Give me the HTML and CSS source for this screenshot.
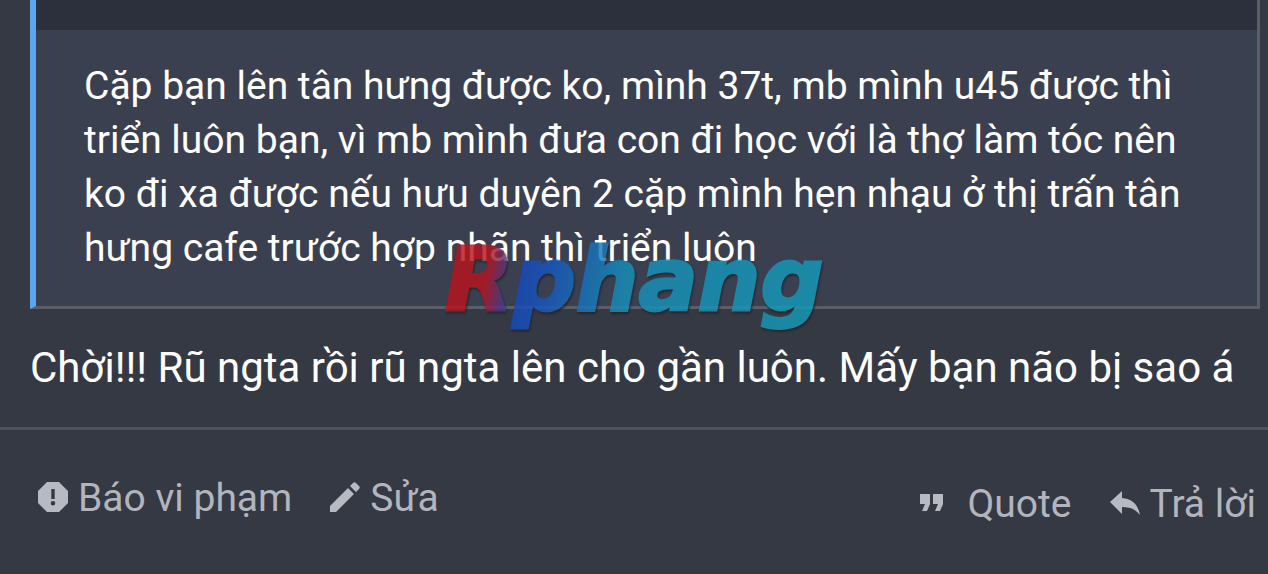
FILE: index.html
```html
<!DOCTYPE html>
<html lang="vi">
<head>
<meta charset="utf-8">
<meta name="viewport" content="width=device-width, initial-scale=1">
<title>Rphang</title>
<link rel="stylesheet" href="styles.css">
</head>
<body>
<article class="post">
  <div class="post-body">
    <blockquote class="quote">
      <div class="quote-head"></div>
      <p class="quote-text">Cặp bạn lên tân hưng được ko, mình 37t, mb mình u45 được thì triển luôn bạn, vì mb mình đưa con đi học với là thợ làm tóc nên ko đi xa được nếu hưu duyên 2 cặp mình hẹn nhạu ở thị trấn tân hưng cafe trước hợp nhãn thì triển luôn</p>
    </blockquote>
    <p class="reply-text">Chời!!! Rũ ngta rồi rũ ngta lên cho gần luôn. Mấy bạn não bị sao á</p>
  </div>
  <footer class="actions">
    <div class="group">
      <a class="action" href="#report">
        <svg class="icon" viewBox="0 0 30 32" aria-hidden="true"><path fill-rule="evenodd" d="M9 0h12l9 9v12l-9 9H9l-9-9V9zM13.300 7v10h3.400V7zM15 19a2.300 2.300 0 1 0 0 4.600 2.300 2.300 0 0 0 0-4.600z"/></svg>
        <span>Báo vi phạm</span>
      </a>
      <a class="action" href="#edit">
        <svg class="icon" viewBox="0 0 30 32" aria-hidden="true"><path d="M0 24 18 6l6 6L6 30H0zM20 4l3-3q1.500-1.500 3 0l3 3q1.500 1.500 0 3l-3 3z"/></svg>
        <span>Sửa</span>
      </a>
    </div>
    <div class="group group-end">
      <a class="action action-quote" href="#quote">
        <svg class="icon icon-quote" viewBox="0 0 24 20" aria-hidden="true"><path d="M0 0h10v10L7 17H2l3-7H0zM13 0h10v10l-3 7h-5l3-7h-5z"/></svg>
        <span>Quote</span>
      </a>
      <a class="action" href="#reply">
        <svg class="icon" viewBox="0 0 30 32" aria-hidden="true"><path d="M12 3v7c11 1 16 7 18 17-5-6-10-8-18-8v7L0 14z"/></svg>
        <span>Trả lời</span>
      </a>
    </div>
  </footer>
  <svg class="watermark" viewBox="0 0 390 120" role="img" aria-label="Rphang">
    <defs>
      <linearGradient id="brand" gradientUnits="userSpaceOnUse" x1="0" y1="0" x2="380" y2="65">
        <stop offset="0" stop-color="#b8141d"/>
        <stop offset=".14" stop-color="#b8141d"/>
        <stop offset=".22" stop-color="#1649bd"/>
        <stop offset=".3" stop-color="#1756bd"/>
        <stop offset=".5" stop-color="#178fb8"/>
        <stop offset="1" stop-color="#159bb9"/>
      </linearGradient>
    </defs>
    <text class="brand" x="6" y="79" fill="url(#brand)" stroke="url(#brand)">Rphang</text>
  </svg>
</article>
</body>
</html>
```
FILE: styles.css
```css
* { box-sizing: border-box; }
body {
  margin: 0;
  background: #353943;
  color: #fff;
  font-family: Roboto, "Noto Sans", sans-serif;
}
.post { position: relative; }
.post-body {
  padding: 0 8px 31px 30px;
  border-bottom: 3px solid #4d515b;
}
.quote {
  margin: 0;
  background: #3b4050;
  border: 3px solid #5b5e66;
  border-top: 0;
  border-left: 6px solid #5ba6f0;
}
.quote-head {
  height: 30px;
  background: #2c303c;
}
.quote-text {
  margin: 0;
  padding: 29px 48px 31px;
  font-size: 39px;
  line-height: 54px;
}
.reply-text {
  margin: 31px 0 0;
  font-size: 42px;
  line-height: 56px;
  white-space: nowrap;
}
.actions {
  display: flex;
  justify-content: space-between;
  align-items: flex-start;
  padding: 44px 12px 0 38px;
}
.group {
  display: flex;
  gap: 38px;
}
.group-end {
  padding-top: 6px;
}
.action {
  display: flex;
  align-items: center;
  gap: 10px;
  color: #b2b5be;
  font-size: 39px;
  line-height: 48px;
  text-decoration: none;
}
.action-quote { gap: 24px; }
.icon {
  width: 30px;
  height: 32px;
  fill: #b7bac3;
}
.icon-quote {
  width: 24px;
  height: 20px;
}
.watermark {
  position: absolute;
  left: 50%;
  top: 231px;
  width: 390px;
  height: 120px;
  margin-left: -195px;
  overflow: visible;
  opacity: .82;
  pointer-events: none;
  filter: drop-shadow(1px 2px 1px #20232c);
}
.brand {
  font-family: "DejaVu Sans", sans-serif;
  font-size: 88px;
  font-weight: bold;
  font-style: italic;
  stroke-width: 3px;
}
```
